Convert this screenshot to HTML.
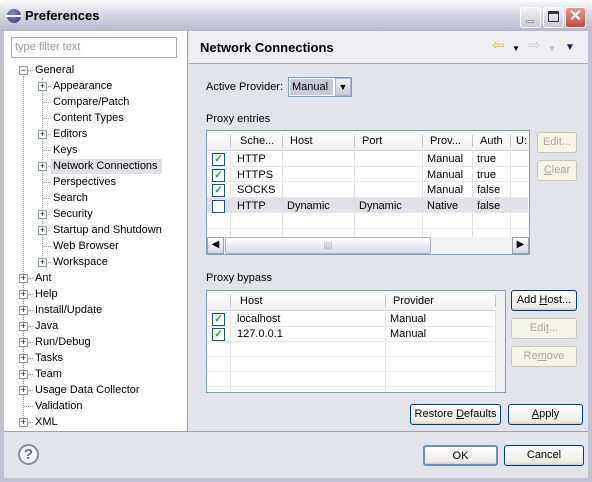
<!DOCTYPE html>
<html><head><style>
*{box-sizing:border-box;margin:0;padding:0}
body{width:592px;height:482px;overflow:hidden;background:#fff;font-family:"Liberation Sans",sans-serif;font-size:11px;color:#000;position:relative}
.a{position:absolute}
.t{position:absolute;white-space:nowrap;line-height:13px}
.btn{position:absolute;border:1px solid #003c74;border-radius:3px;background:linear-gradient(#fff,#ecebe6 85%,#d6d0c5);text-align:center;line-height:19px;font-size:11px}
.dis{border-color:#c9c7ba;color:#aca899;background:#f5f4ea}
.ex{position:absolute;width:9px;height:9px;border:1px solid #919b9c;background:#fff;font-size:9px;line-height:7px;text-align:center;color:#000}
.cb{position:absolute;width:13px;height:13px;border:1px solid #1c5180;background:#fff;color:#21a121;font-size:10px;line-height:11px;text-align:center;font-weight:bold}
.vl{position:absolute;width:1px;background:#e0e0e0}
.hl{position:absolute;height:1px;background:#e8e8e8}
</style></head><body>
<div class="a" style="left:0;top:0;width:592px;height:482px;background:#c0c0ce;border-radius:7px 7px 0 0"></div>
<div class="a" style="left:0;top:0;width:592px;height:31px;border-radius:7px 7px 0 0;background:linear-gradient(#fdfdfe,#d8d8e3 45%,#c6c5d7 80%,#b7b6cb)"></div>
<div class="a" style="left:7px;top:9px;width:14px;height:14px;border-radius:50%;background:radial-gradient(circle at 40% 35%,#8a8ad8,#2b2b7a)"></div>
<div class="a" style="left:6px;top:15px;width:16px;height:2px;background:#fff"></div>
<div class="t" style="left:25px;top:9px;font-size:13px;font-weight:bold;color:#000">Preferences</div>
<div class="a" style="left:520px;top:7px;width:21px;height:21px;border:1px solid #fff;border-radius:3px;background:linear-gradient(#f2f2f6,#c8c8d6)"></div>
<div class="a" style="left:526px;top:20px;width:8px;height:3px;background:#fff;border:1px solid #999"></div>
<div class="a" style="left:543px;top:7px;width:21px;height:21px;border:1px solid #fff;border-radius:3px;background:linear-gradient(#f2f2f6,#c8c8d6)"></div>
<div class="a" style="left:548px;top:11px;width:11px;height:11px;border:1px solid #333;border-top-width:3px"></div>
<div class="a" style="left:565px;top:7px;width:21px;height:21px;border:1px solid #fff;border-radius:3px;background:linear-gradient(#e89a8a,#c44a3a);color:#fff;font-weight:bold;font-size:16px;line-height:18px;text-align:center">✕</div>
<div class="a" style="left:4px;top:31px;width:584px;height:447px;background:#e3e3ea"></div>
<div class="a" style="left:4px;top:31px;width:184px;height:401px;background:#fff;border-right:1px solid #9d9da1"></div>
<div class="a" style="left:11px;top:37px;width:166px;height:21px;border:1px solid #a5acb2;background:#fff"></div>
<div class="t" style="left:15px;top:41px;color:#989898">type filter text</div>
<div class="a" style="left:23px;top:76px;height:350px;border-left:1px dotted #a0a0a0"></div>
<div class="a" style="left:42px;top:78px;height:186px;border-left:1px dotted #a0a0a0"></div>
<div class="a" style="left:51px;top:159px;width:111px;height:15px;background:#e0e0e6"></div>
<div id="tree"></div>
<div class="a" style="left:189px;top:31px;width:399px;height:33px;background:#eeeef2;border-bottom:1px solid #a9a9b1"></div>
<div class="t" style="left:200px;top:41px;font-size:13px;font-weight:bold">Network Connections</div>
<div class="t" style="left:492px;top:39px;font-size:15px;color:#e3b23a">⇦</div>
<div class="t" style="left:512px;top:42px;font-size:8px">▼</div>
<div class="t" style="left:528px;top:39px;font-size:15px;color:#d0d0d0">⇨</div>
<div class="t" style="left:548px;top:42px;font-size:8px;color:#c0c0c0">▼</div>
<div class="t" style="left:565px;top:41px;font-size:10px;color:#1e1e5a">▼</div>
<div class="t" style="left:206px;top:81px">Active Provider:</div>
<div class="a" style="left:288px;top:77px;width:64px;height:20px;border:1px solid #7f9db9;background:#fff"></div>
<div class="a" style="left:290px;top:79px;width:43px;height:16px;background:#c8c8d6"></div>
<div class="t" style="left:292px;top:81px">Manual</div>
<div class="a" style="left:335px;top:78px;width:16px;height:18px;background:linear-gradient(#f0f0f6,#c8cad8);border:1px solid #b0b4c8;font-size:9px;text-align:center;line-height:16px">▼</div>
<div class="t" style="left:206px;top:113px">Proxy entries</div>
<div class="a" style="left:206px;top:130px;width:324px;height:125px;border:1px solid #7f9db9;background:#fff"></div>
<div class="a" style="left:207px;top:131px;width:322px;height:20px;background:linear-gradient(#fff,#f0f0f0);border-bottom:1px solid #d5d5d5"></div>
<div class="a" style="left:207px;top:197px;width:321px;height:15px;background:#e0e0e6"></div>
<div id="t1"></div>
<div class="a" style="left:207px;top:237px;width:322px;height:17px;background:#f3f3f3"></div>
<div class="a" style="left:207px;top:237px;width:17px;height:17px;border:1px solid #a0a0b0;background:linear-gradient(#fff,#d8d8e0);font-size:10px;text-align:center;line-height:14px">◀</div>
<div class="a" style="left:225px;top:237px;width:206px;height:17px;border:1px solid #b0b0c0;border-radius:2px;background:linear-gradient(#fff,#dcdce6);text-align:center;font-size:8px;line-height:15px;color:#999">||||</div>
<div class="a" style="left:512px;top:237px;width:17px;height:17px;border:1px solid #a0a0b0;background:linear-gradient(#fff,#d8d8e0);font-size:10px;text-align:center;line-height:14px">▶</div>
<div class="btn dis" style="left:537px;top:132px;width:40px;height:21px">Edit...</div>
<div class="btn dis" style="left:537px;top:160px;width:40px;height:21px"><u>C</u>lear</div>
<div class="t" style="left:206px;top:272px">Proxy bypass</div>
<div class="a" style="left:206px;top:290px;width:300px;height:103px;border:1px solid #7f9db9;background:#fff"></div>
<div class="a" style="left:207px;top:291px;width:298px;height:20px;background:linear-gradient(#fff,#f0f0f0);border-bottom:1px solid #d5d5d5"></div>
<div class="a" style="left:496px;top:291px;width:9px;height:101px;background:#f0f0f0"></div>
<div id="t2"></div>
<div class="btn" style="left:511px;top:290px;width:66px;height:21px">Add <u>H</u>ost...</div>
<div class="btn dis" style="left:511px;top:318px;width:66px;height:21px">Edi<u>t</u>...</div>
<div class="btn dis" style="left:511px;top:346px;width:66px;height:21px">Re<u>m</u>ove</div>
<div class="btn" style="left:410px;top:404px;width:91px;height:21px">Restore <u>D</u>efaults</div>
<div class="btn" style="left:508px;top:404px;width:75px;height:21px"><u>A</u>pply</div>
<div class="a" style="left:4px;top:431px;width:584px;height:1px;background:#a0a0a8"></div>
<div class="a" style="left:18px;top:444px;width:21px;height:21px;border-radius:50%;border:2px solid #8a8a98;background:#f4f4f8;color:#6a6a7a;font-weight:bold;font-size:15px;line-height:17px;text-align:center">?</div>
<div class="btn" style="left:423px;top:445px;width:75px;height:21px;border:2px solid #6d8dc0">OK</div>
<div class="btn" style="left:504px;top:445px;width:80px;height:21px">Cancel</div>
<script>
var tree=[["General",0,"-"],["Appearance",1,"+"],["Compare/Patch",1,""],["Content Types",1,""],["Editors",1,"+"],["Keys",1,""],["Network Connections",1,"+"],["Perspectives",1,""],["Search",1,""],["Security",1,"+"],["Startup and Shutdown",1,"+"],["Web Browser",1,""],["Workspace",1,"+"],["Ant",0,"+"],["Help",0,"+"],["Install/Update",0,"+"],["Java",0,"+"],["Run/Debug",0,"+"],["Tasks",0,"+"],["Team",0,"+"],["Usage Data Collector",0,"+"],["Validation",0,""],["XML",0,"+"]];
var h="";
tree.forEach(function(r,i){var y=64+i*16,x=r[1]?53:35,ex=r[1]?38:19;
h+='<div class="a" style="left:'+(ex+5)+'px;top:'+(y+6)+'px;width:'+(x-ex-7)+'px;border-top:1px dotted #a0a0a0"></div>';
if(r[2])h+='<div class="ex" style="left:'+ex+'px;top:'+(y+2)+'px">'+(r[2]=="-"?"−":"+")+'</div>';
h+='<div class="t" style="left:'+x+'px;top:'+y+'px">'+r[0]+'</div>';});
document.getElementById("tree").innerHTML=h;
h="";
[230,282,354,422,472,510].forEach(function(x){h+='<div class="vl" style="left:'+x+'px;top:151px;height:86px"></div><div class="vl" style="left:'+x+'px;top:135px;height:12px;background:#c5c5c5"></div>';});
[166,181,197,212,228].forEach(function(y){h+='<div class="hl" style="left:207px;top:'+y+'px;width:322px"></div>';});
[["Sche...",240],["Host",290],["Port",362],["Prov...",430],["Auth",480],["U:",516]].forEach(function(c){h+='<div class="t" style="left:'+c[1]+'px;top:135px">'+c[0]+'</div>';});
[["HTTP","","","Manual","true",1],["HTTPS","","","Manual","true",1],["SOCKS","","","Manual","false",1],["HTTP","Dynamic","Dynamic","Native","false",0]].forEach(function(r,i){var y=152+i*15.5;
h+='<div class="cb" style="left:212px;top:'+(y+1)+'px">'+(r[5]?"✓":"")+'</div>';
[237,287,359,427,477].forEach(function(x,j){h+='<div class="t" style="left:'+x+'px;top:'+(y+1)+'px">'+r[j]+'</div>';});});
document.getElementById("t1").innerHTML=h;
h="";
[230,385,495].forEach(function(x){h+='<div class="vl" style="left:'+x+'px;top:311px;height:81px"></div><div class="vl" style="left:'+x+'px;top:295px;height:12px;background:#c5c5c5"></div>';});
[326,341,356,371,386].forEach(function(y){h+='<div class="hl" style="left:207px;top:'+y+'px;width:289px"></div>';});
h+='<div class="t" style="left:240px;top:295px">Host</div><div class="t" style="left:393px;top:295px">Provider</div>';
[["localhost","Manual"],["127.0.0.1","Manual"]].forEach(function(r,i){var y=312+i*15;
h+='<div class="cb" style="left:212px;top:'+(y+1)+'px">✓</div><div class="t" style="left:237px;top:'+(y+1)+'px">'+r[0]+'</div><div class="t" style="left:390px;top:'+(y+1)+'px">'+r[1]+'</div>';});
document.getElementById("t2").innerHTML=h;
</script>
</body></html>
